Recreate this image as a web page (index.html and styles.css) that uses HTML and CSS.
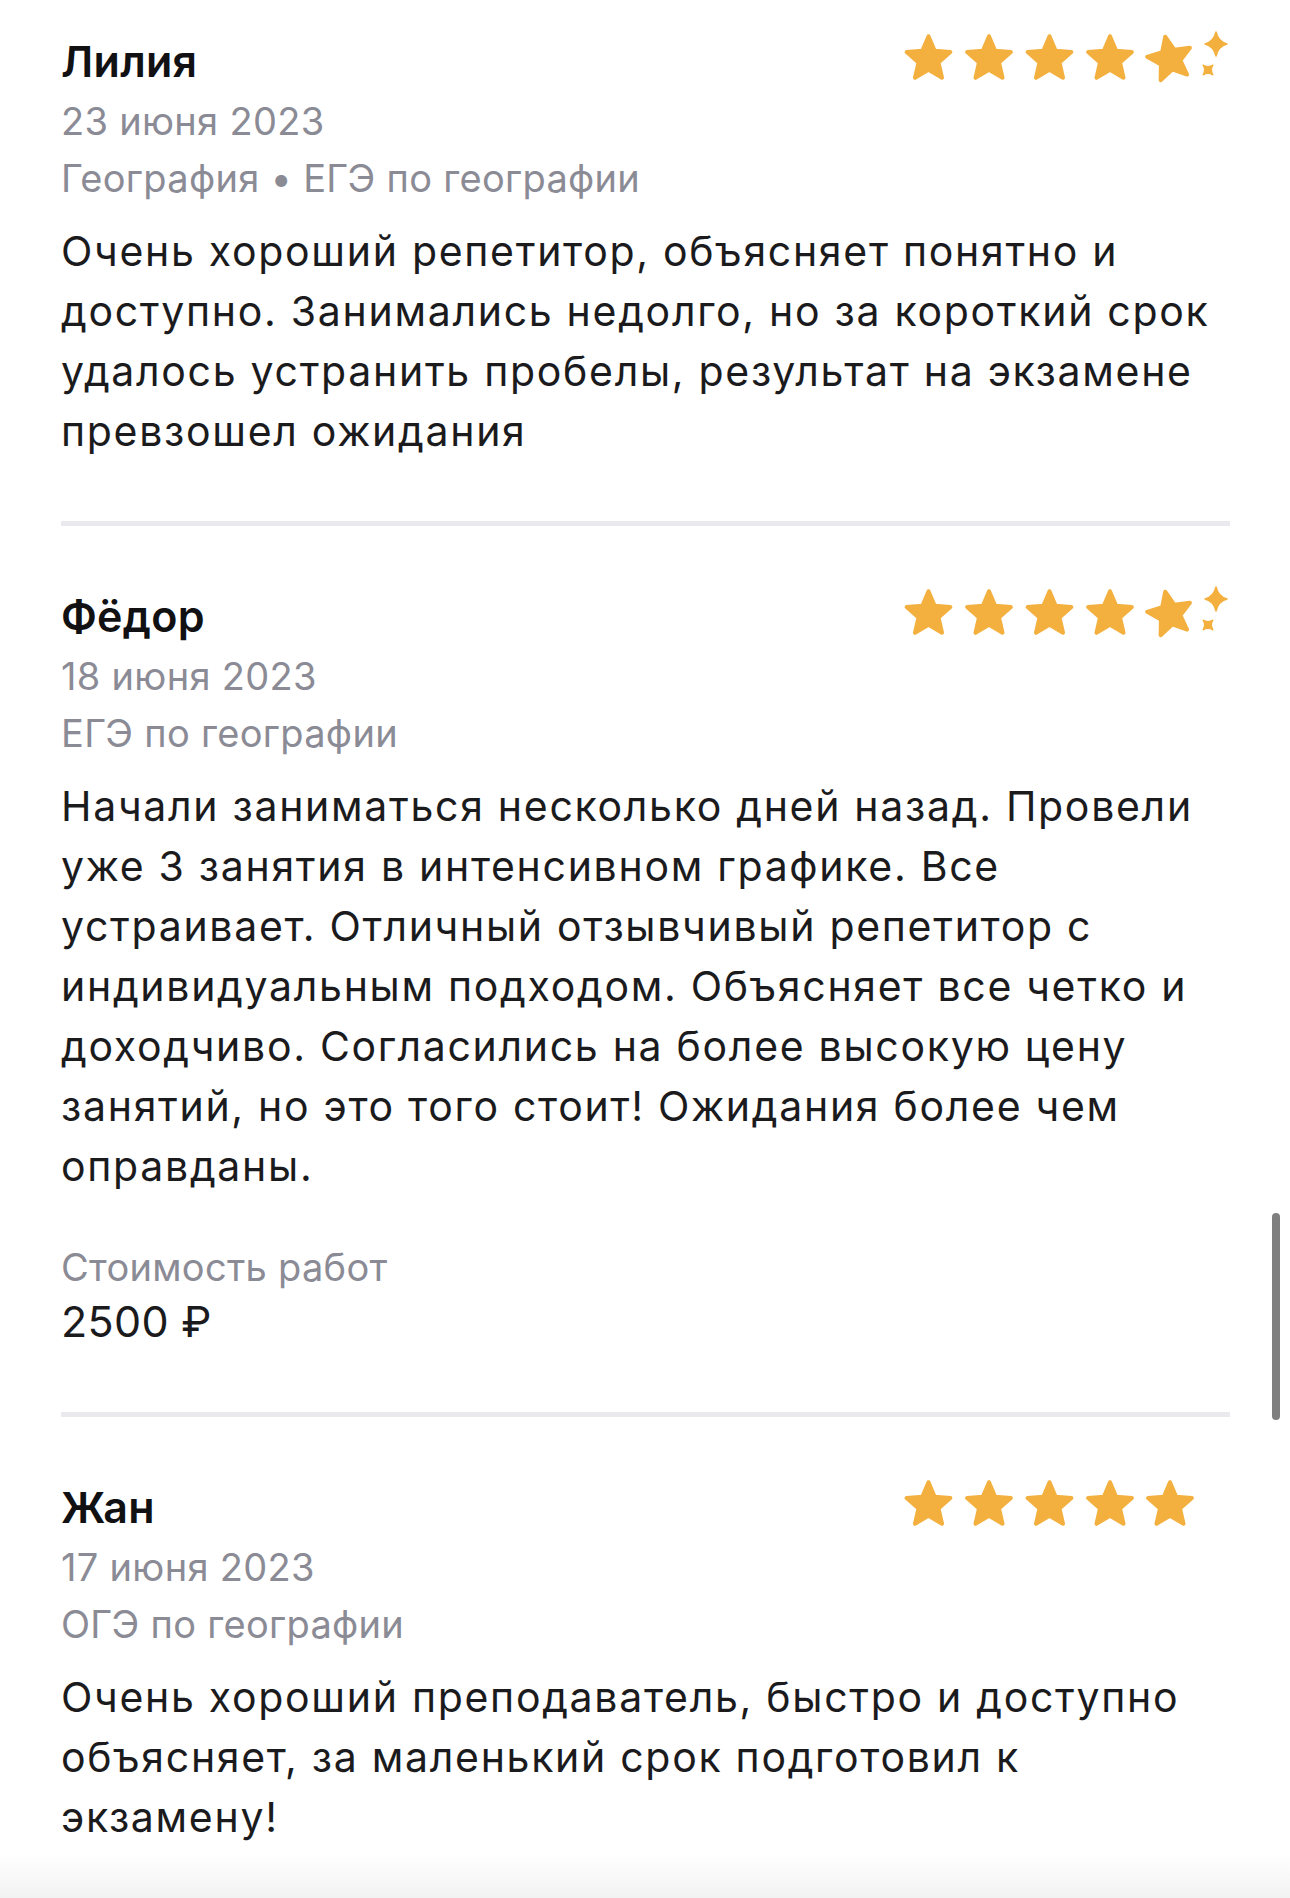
FILE: index.html
```html
<!DOCTYPE html>
<html lang="ru">
<head>
<meta charset="utf-8">
<title>Отзывы</title>
<link rel="stylesheet" href="styles.css">
</head>
<body>
<svg class="defs" width="0" height="0" aria-hidden="true">
  <defs>
    <polygon id="star" points="0,-23 6.17,-8.49 21.87,-7.11 9.99,3.24 13.52,18.61 0,10.5 -13.52,18.61 -9.99,3.24 -21.87,-7.11 -6.17,-8.49" fill="#f3b03e" stroke="#f3b03e" stroke-width="4" stroke-linejoin="round"/>
    <path id="spark" d="M0,-12 Q2.2,-2.2 11,0 Q2.2,2.2 0,12 Q-2.2,2.2 -11,0 Q-2.2,-2.2 0,-12Z" fill="#f3b03e" stroke="#f3b03e" stroke-width="1.5" stroke-linejoin="round"/>
    <path id="spark-s" d="M0,-7 Q1.4,-1.4 7,0 Q1.4,1.4 0,7 Q-1.4,1.4 -7,0 Q-1.4,-1.4 0,-7Z" fill="#f3b03e" stroke="#f3b03e" stroke-width="1.2" stroke-linejoin="round"/>
  </defs>
</svg>

<main class="reviews">
  <article class="review">
    <div class="head">
      <div class="name">Лилия</div>
      <svg class="stars" width="330" height="60" viewBox="0 0 330 60">
        <use href="#star" x="28.5" y="32.2"/>
        <use href="#star" x="89" y="32.2"/>
        <use href="#star" x="149.5" y="32.2"/>
        <use href="#star" x="210" y="32.2"/>
        <use href="#star" transform="translate(270 32.2) rotate(-12)"/>
        <use href="#spark" x="316" y="17"/>
        <use href="#spark-s" transform="translate(308 43) rotate(45)"/>
      </svg>
    </div>
    <div class="date">23 июня 2023</div>
    <div class="cat">География • ЕГЭ по географии</div>
    <p class="text">Очень хороший репетитор, объясняет понятно и доступно. Занимались недолго, но за короткий срок удалось устранить пробелы, результат на экзамене превзошел ожидания</p>
  </article>

  <article class="review">
    <div class="head">
      <div class="name">Фёдор</div>
      <svg class="stars" width="330" height="60" viewBox="0 0 330 60">
        <use href="#star" x="28.5" y="32.2"/>
        <use href="#star" x="89" y="32.2"/>
        <use href="#star" x="149.5" y="32.2"/>
        <use href="#star" x="210" y="32.2"/>
        <use href="#star" transform="translate(270 32.2) rotate(-12)"/>
        <use href="#spark" x="316" y="17"/>
        <use href="#spark-s" transform="translate(308 43) rotate(45)"/>
      </svg>
    </div>
    <div class="date">18 июня 2023</div>
    <div class="cat">ЕГЭ по географии</div>
    <p class="text">Начали заниматься несколько дней назад. Провели уже 3 занятия в интенсивном графике. Все устраивает. Отличный отзывчивый репетитор с индивидуальным подходом. Объясняет все четко и доходчиво. Согласились на более высокую цену занятий, но это того стоит! Ожидания более чем оправданы.</p>
    <div class="price-label">Стоимость работ</div>
    <div class="price">2500 ₽</div>
  </article>

  <article class="review">
    <div class="head">
      <div class="name">Жан</div>
      <svg class="stars" width="330" height="60" viewBox="0 0 330 60">
        <use href="#star" x="28.5" y="32.2"/>
        <use href="#star" x="89" y="32.2"/>
        <use href="#star" x="149.5" y="32.2"/>
        <use href="#star" x="210" y="32.2"/>
        <use href="#star" x="270" y="32.2"/>
      </svg>
    </div>
    <div class="date">17 июня 2023</div>
    <div class="cat">ОГЭ по географии</div>
    <p class="text">Очень хороший преподаватель, быстро и доступно объясняет, за маленький срок подготовил к экзамену!</p>
  </article>
</main>

<div class="scrollbar"></div>
<div class="bottom-fade"></div>
</body>
</html>
```

FILE: styles.css
```css
* { box-sizing: border-box; }

html, body {
  margin: 0;
  padding: 0;
  background: #ffffff;
  height: 1898px;
  overflow: hidden;
}

body {
  font-family: Inter, "Noto Sans", "Liberation Sans", sans-serif;
  color: #1b1b1d;
  position: relative;
}

.defs {
  position: absolute;
  width: 0;
  height: 0;
}

.reviews {
  margin-left: 61px;
  width: 1169px;
}

.review {
  padding-top: 65px;
  padding-bottom: 60px;
  border-bottom: 5px solid #e9e9ee;
}

.review:first-child {
  padding-top: 35.5px;
}

.review:last-child {
  border-bottom: none;
}

.head {
  display: flex;
  justify-content: space-between;
  align-items: flex-start;
  height: 50px;
}

.name {
  font-size: 43px;
  font-weight: 600;
  line-height: 50px;
  letter-spacing: 0.3px;
  color: #111113;
}

.stars {
  display: block;
  margin-top: -8.5px;
  flex-shrink: 0;
}

.date,
.cat,
.price-label {
  font-size: 38px;
  line-height: 57px;
  letter-spacing: 0.3px;
  color: #8b8b96;
}

.date {
  margin-top: 7px;
}

.text {
  margin: 14px 0 0;
  font-size: 41px;
  line-height: 60px;
  letter-spacing: 1.7px;
  color: #1b1b1d;
}

.price-label {
  margin-top: 45px;
  line-height: 52px;
}

.price {
  font-size: 43px;
  line-height: 56px;
  letter-spacing: 0.3px;
  color: #1b1b1d;
  margin-bottom: 3px;
}

.scrollbar {
  position: absolute;
  left: 1272px;
  top: 1213px;
  width: 8px;
  height: 207px;
  border-radius: 4px;
  background: #7f7f7f;
}

.bottom-fade {
  position: absolute;
  left: 0;
  right: 0;
  bottom: 0;
  height: 45px;
  background: linear-gradient(to bottom, rgba(242, 242, 242, 0), #f2f2f2);
}
```
